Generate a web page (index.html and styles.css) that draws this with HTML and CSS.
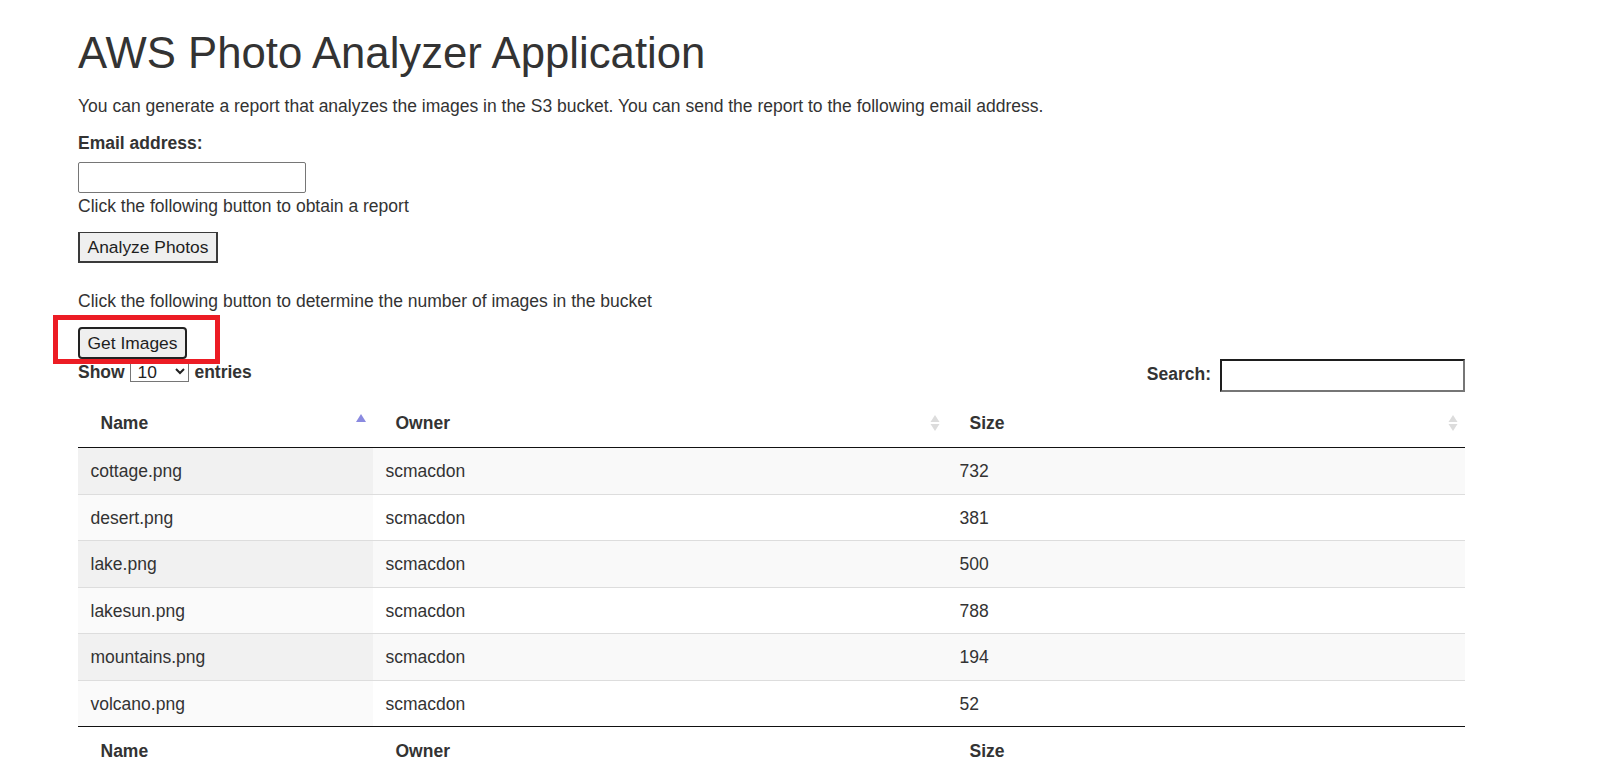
FILE: index.html
```html
<!DOCTYPE html>
<html lang="en">
<head>
<meta charset="utf-8">
<title>AWS Photo Analyzer Application</title>
<link rel="stylesheet" href="styles.css">
</head>
<body>
<div class="page">
  <h1 class="title">AWS Photo Analyzer Application</h1>
  <p class="intro">You can generate a report that analyzes the images in the S3 bucket. You can send the report to the following email address.</p>
  <label class="field-label" for="email">Email address:</label>
  <input class="email-input" id="email" type="text">
  <p class="hint hint-report">Click the following button to obtain a report</p>
  <button class="btn btn-analyze" type="button">Analyze Photos</button>
  <p class="hint hint-bucket">Click the following button to determine the number of images in the bucket</p>
  <div class="get-wrap">
    <button class="btn btn-get" type="button">Get Images</button>
    <span class="highlight"></span>
  </div>
  <div class="dt-wrapper">
    <div class="dt-controls">
      <div class="dt-length">Show <select class="dt-select"><option>10</option><option>25</option><option>50</option><option>100</option></select> entries</div>
      <div class="dt-filter"><span class="dt-filter-label">Search:</span><input class="dt-search" type="search"></div>
    </div>
    <table class="dt-table">
      <colgroup><col class="col-name"><col class="col-owner"><col class="col-size"></colgroup>
      <thead>
        <tr>
          <th>Name<svg class="sort-icon" width="12" height="24" viewBox="0 0 12 24"><polygon points="1,12 11,12 6,4" fill="#8a8ae0"/></svg></th>
          <th>Owner<svg class="sort-icon" width="12" height="24" viewBox="0 0 12 24"><polygon points="1.5,12 10.5,12 6,5" fill="#dcdcdc"/><polygon points="1.5,14 10.5,14 6,21" fill="#dcdcdc"/></svg></th>
          <th>Size<svg class="sort-icon" width="12" height="24" viewBox="0 0 12 24"><polygon points="1.5,12 10.5,12 6,5" fill="#dcdcdc"/><polygon points="1.5,14 10.5,14 6,21" fill="#dcdcdc"/></svg></th>
        </tr>
      </thead>
      <tbody>
        <tr class="odd"><td class="sorted">cottage.png</td><td>scmacdon</td><td>732</td></tr>
        <tr class="even"><td class="sorted">desert.png</td><td>scmacdon</td><td>381</td></tr>
        <tr class="odd"><td class="sorted">lake.png</td><td>scmacdon</td><td>500</td></tr>
        <tr class="even"><td class="sorted">lakesun.png</td><td>scmacdon</td><td>788</td></tr>
        <tr class="odd"><td class="sorted">mountains.png</td><td>scmacdon</td><td>194</td></tr>
        <tr class="even"><td class="sorted">volcano.png</td><td>scmacdon</td><td>52</td></tr>
      </tbody>
      <tfoot>
        <tr><th>Name</th><th>Owner</th><th>Size</th></tr>
      </tfoot>
    </table>
  </div>
</div>
</body>
</html>
```
FILE: styles.css
```css
html, body {
  margin: 0;
  padding: 0;
  background: #fff;
}

body {
  font-family: "Liberation Sans", Arial, sans-serif;
  font-size: 17.5px;
  line-height: 25px;
  color: #333;
}

.page {
  width: 1387px;
  padding: 29px 0 0 78px;
}

.title {
  margin: 0 0 16px;
  font-size: 43.7px;
  line-height: 47.5px;
  font-weight: 400;
  color: #333;
}

.intro {
  margin: 0 0 11.5px;
  padding-top: 1px;
}

.field-label {
  display: block;
  font-weight: 700;
  padding-top: 1px;
  margin-bottom: 6px;
}

.email-input {
  display: block;
  box-sizing: border-box;
  width: 228px;
  height: 31px;
  margin: 0;
  border: 1px solid #767676;
  border-radius: 2px;
  background: #fff;
  font: inherit;
  padding: 0 4px;
}

.hint {
  margin: 0;
  padding-top: 1px;
}

.hint-report {
  margin-bottom: 13px;
}

.hint-bucket {
  margin-bottom: 13.5px;
}

.btn {
  display: block;
  box-sizing: border-box;
  margin: 0;
  background: #efefef;
  color: #1e1e1e;
  font-family: "Liberation Sans", Arial, sans-serif;
  font-size: 17.4px;
  line-height: 20px;
  padding: 0;
  white-space: nowrap;
  text-align: center;
  cursor: pointer;
}

.btn-analyze {
  width: 140px;
  height: 31px;
  border: 2px solid #3a3a3a;
  border-top-width: 1px;
  border-radius: 0;
  margin-bottom: 24.5px;
}

.btn-get {
  width: 109px;
  height: 32px;
  border: 2px solid #222;
  border-radius: 4px;
}

.get-wrap {
  position: relative;
  width: 109px;
}

.highlight {
  position: absolute;
  left: -25px;
  top: -12px;
  width: 167px;
  height: 49px;
  box-sizing: border-box;
  border: 5px solid #ec1c24;
  pointer-events: none;
}

.dt-controls {
  display: flex;
  justify-content: space-between;
  align-items: flex-start;
}

.dt-length {
  font-weight: 700;
  line-height: 25px;
  padding-top: 0.5px;
}

.dt-select {
  box-sizing: border-box;
  width: 59px;
  height: 22px;
  margin: 0 1px 0 0;
  padding: 0 0 0 3px;
  border: 1px solid #767676;
  border-radius: 0;
  background: #fff;
  color: #222;
  font-family: "Liberation Sans", Arial, sans-serif;
  font-size: 17.4px;
  font-weight: 400;
  vertical-align: baseline;
}

.dt-filter {
  display: flex;
  align-items: flex-start;
  gap: 9px;
}

.dt-filter-label {
  font-weight: 700;
  margin-top: 3px;
}

.dt-search {
  box-sizing: border-box;
  width: 245px;
  height: 33px;
  margin: 0;
  border-style: solid;
  border-width: 2px;
  border-color: #1e1e1e #767676 #767676 #1e1e1e;
  background: #fff;
  font: inherit;
  -webkit-appearance: none;
  appearance: none;
}

.dt-table {
  width: 1387px;
  margin-top: 5px;
  border-collapse: separate;
  border-spacing: 0;
  table-layout: fixed;
}

.col-name { width: 295px; }
.col-owner { width: 574px; }
.col-size { width: 518px; }

.dt-table th {
  text-align: left;
  font-weight: 700;
  color: #333;
  line-height: 25px;
}

.dt-table thead th {
  position: relative;
  padding: 13.5px 22.5px 11.5px;
  border-bottom: 1px solid #111;
}

.sort-icon {
  position: absolute;
  right: 6px;
  top: 50%;
  transform: translateY(-50%);
}

.dt-table tfoot th {
  padding: 12px 22.5px 8px;
  border-top: 1px solid #111;
}

.dt-table td {
  padding: 11px 12.5px 9.5px;
  border-top: 1px solid #ddd;
  line-height: 25px;
  color: #333;
}

.dt-table tbody tr:first-child td {
  border-top: none;
}

.dt-table tr.odd td {
  background: #f9f9f9;
}

.dt-table tr.odd td.sorted {
  background: #f1f1f1;
}

.dt-table tr.even td {
  background: #fff;
}

.dt-table tr.even td.sorted {
  background: #fafafa;
}
```
